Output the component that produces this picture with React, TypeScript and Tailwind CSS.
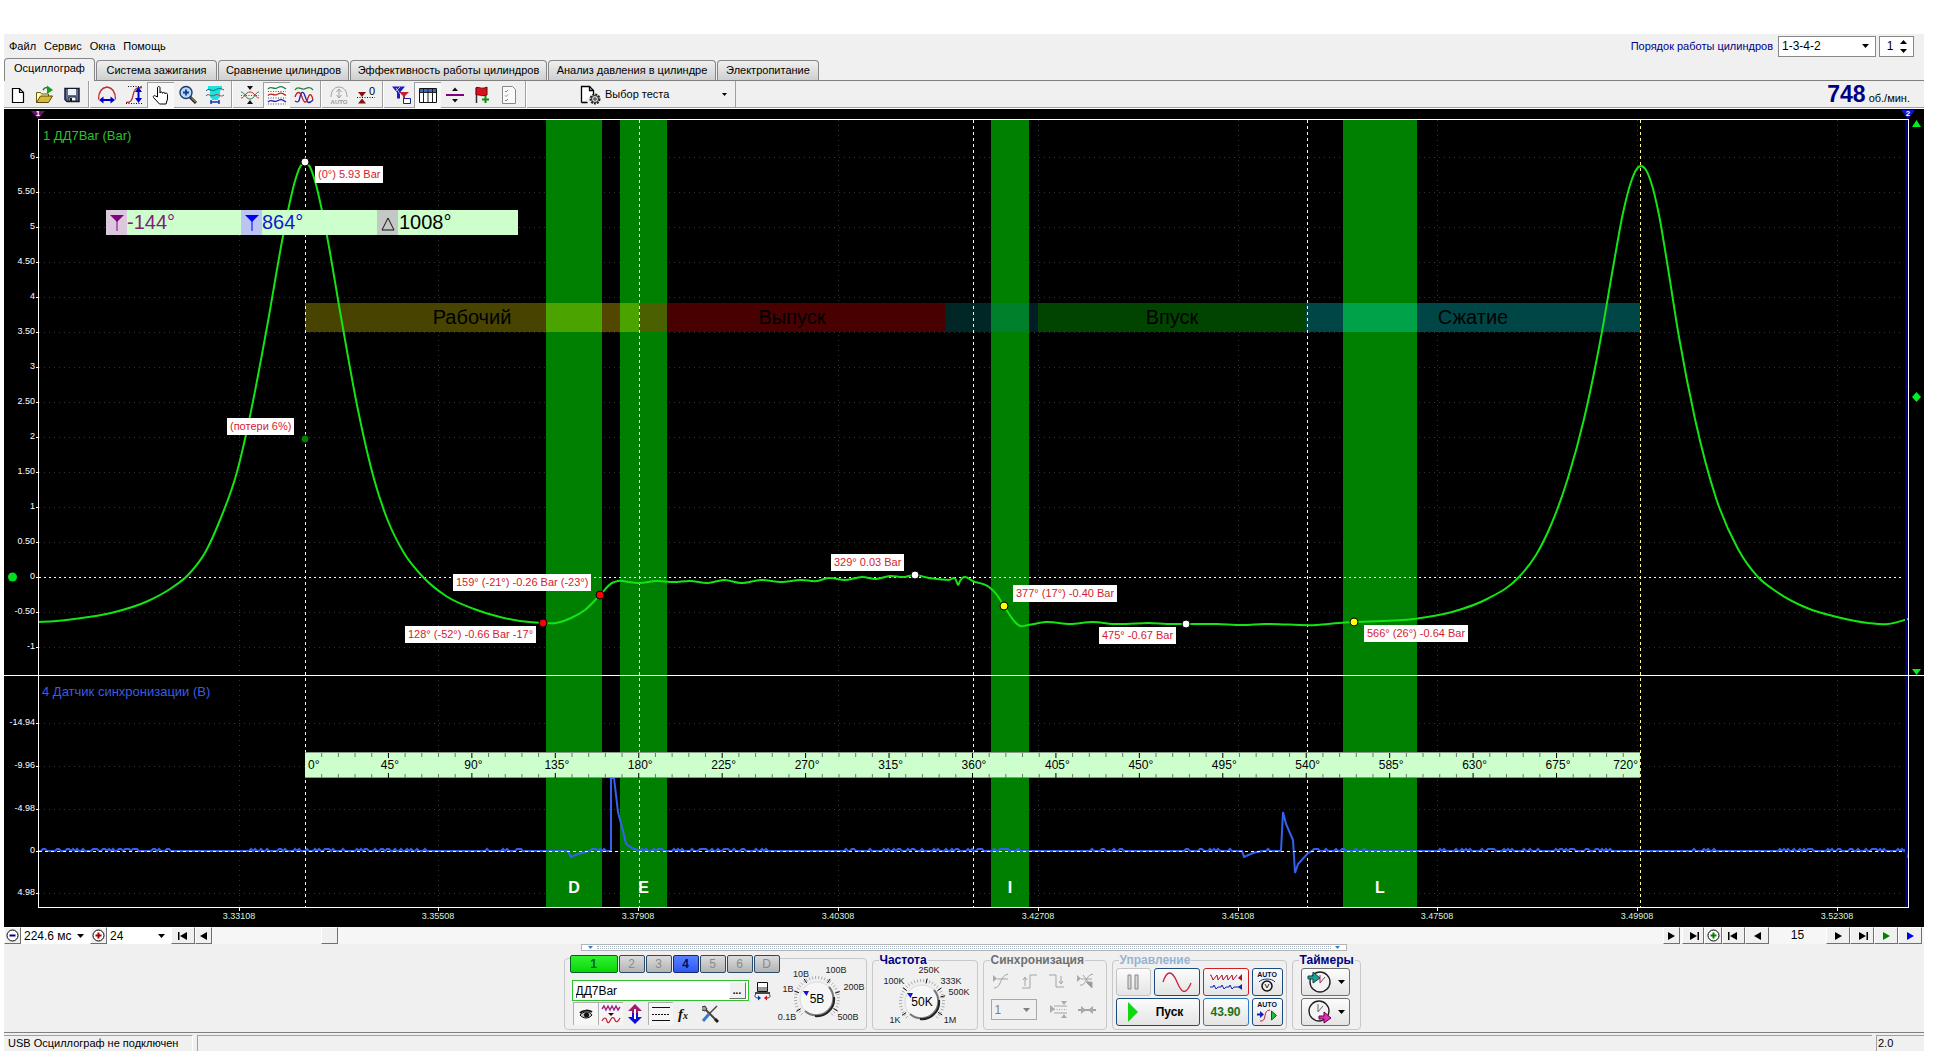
import type { ReactNode } from 'react';
import clsx from 'clsx';

// the scope canvas is drawn in one coordinate space, shared by the svg and the html labels
const VIEW = { x: 4, y: 109, w: 1920, h: 818 };

const at = (x: number, y: number) => ({
  left: `${((x - VIEW.x) / VIEW.w) * 100}%`,
  top: `${((y - VIEW.y) / VIEW.h) * 100}%`,
});

const barY = (v: number) => 577 - 70 * v;
const degX = (d: number) => 305 + d * 1.8547;

const menu = ['Файл', 'Сервис', 'Окна', 'Помощь'];

const tabs = [
  { label: 'Осциллограф', width: 'w-[91px]' },
  { label: 'Система зажигания', width: 'w-[121px]' },
  { label: 'Сравнение цилиндров', width: 'w-[131px]' },
  { label: 'Эффективность работы цилиндров', width: 'w-[197px]' },
  { label: 'Анализ давления в цилиндре', width: 'w-[168px]' },
  { label: 'Электропитание', width: 'w-[102px]' },
];

const barTicks = [6, 5.5, 5, 4.5, 4, 3.5, 3, 2.5, 2, 1.5, 1, 0.5, 0, -0.5, -1];
const voltTicks = [
  { label: '-14.94', y: 723 },
  { label: '-9.96', y: 766 },
  { label: '-4.98', y: 809 },
  { label: '0', y: 851 },
  { label: '4.98', y: 893 },
];
const timeTicks = ['3.33108', '3.35508', '3.37908', '3.40308', '3.42708', '3.45108', '3.47508', '3.49908', '3.52308'].map(
  (label, i) => ({ label, x: Math.round(238.5 + i * 199.8) }),
);

const bands = [
  { letter: 'D', x1: 546, x2: 602 },
  { letter: 'E', x1: 620, x2: 667 },
  { letter: 'I', x1: 991, x2: 1029 },
  { letter: 'L', x1: 1343, x2: 1417 },
];

const phases = [
  { x1: 305, x2: 546, fill: '#484400' },
  { x1: 546, x2: 602, fill: '#4ba300' },
  { x1: 602, x2: 620, fill: '#524600' },
  { x1: 620, x2: 639, fill: '#4ba300' },
  { x1: 639, x2: 667, fill: '#4b6000' },
  { x1: 667, x2: 945, fill: '#480000' },
  { x1: 945, x2: 991, fill: '#002626' },
  { x1: 991, x2: 1029, fill: '#00802a' },
  { x1: 1029, x2: 1038, fill: '#001c26' },
  { x1: 1038, x2: 1306, fill: '#004400' },
  { x1: 1306, x2: 1343, fill: '#004646' },
  { x1: 1343, x2: 1417, fill: '#00a249' },
  { x1: 1417, x2: 1640, fill: '#004646' },
];

const phaseNames = [
  { label: 'Рабочий', x: 472 },
  { label: 'Выпуск', x: 792 },
  { label: 'Впуск', x: 1172 },
  { label: 'Сжатие', x: 1473 },
];

const callouts = [
  { text: '(0°) 5.93 Bar', x: 315, y: 166 },
  { text: '(потери 6%)', x: 227, y: 418 },
  { text: '159° (-21°) -0.26 Bar (-23°)', x: 453, y: 574 },
  { text: '128° (-52°) -0.66 Bar -17°', x: 405, y: 626 },
  { text: '329° 0.03 Bar', x: 831, y: 554 },
  { text: '377° (17°) -0.40 Bar', x: 1013, y: 585 },
  { text: '475° -0.67 Bar', x: 1099, y: 627 },
  { text: '566° (26°) -0.64 Bar', x: 1364, y: 625 },
];

const dots = [
  { x: 305, y: 162, fill: '#ffffff' },
  { x: 305, y: 439, fill: '#008000' },
  { x: 543, y: 623, fill: '#ff0000' },
  { x: 600, y: 595, fill: '#ff0000' },
  { x: 915, y: 575, fill: '#ffffff' },
  { x: 1004, y: 606, fill: '#ffff00' },
  { x: 1186, y: 624, fill: '#ffffff' },
  { x: 1354, y: 622, fill: '#ffff00' },
];

const pressure: [number, number][] = [
  [39, 622], [56, 621], [74, 619], [111, 613], [148, 601], [170, 589], [188, 575], [206, 551], [220, 520], [237, 472],
  [250, 416], [267, 327], [283, 236], [289, 206], [295, 181], [300, 167], [305, 163], [310, 167], [315, 181],
  [321, 206], [327, 236], [341, 317], [358, 410], [374, 479], [388, 521], [404, 553], [423, 577], [446, 596],
  [474, 609], [500, 617], [520, 621], [543, 623], [556, 623], [571, 618], [585, 610], [600, 595], [612, 583],
  [618, 581], [629, 582], [639, 583], [656, 581], [674, 582], [690, 581], [708, 583], [724, 580], [741, 583],
  [761, 580], [781, 582], [801, 580], [817, 581], [828, 578], [846, 580], [862, 577], [876, 579], [890, 576],
  [904, 577], [915, 575], [929, 578], [949, 580], [956, 580], [958, 585], [960, 581], [975, 582], [989, 587],
  [997, 595], [1004, 606], [1015, 622], [1020, 626], [1028, 625], [1046, 622], [1070, 624], [1093, 622], [1113, 624],
  [1126, 624], [1149, 623], [1167, 624], [1186, 624], [1217, 624], [1242, 625], [1264, 624], [1317, 625], [1339, 623],
  [1354, 622], [1414, 619], [1452, 612], [1487, 599], [1519, 577], [1536, 555], [1551, 525], [1568, 478], [1584, 419],
  [1601, 337], [1614, 262], [1623, 213], [1631, 182], [1636, 170], [1641, 166], [1646, 170], [1651, 182],
  [1659, 215], [1667, 262], [1679, 337], [1695, 419], [1716, 498], [1738, 549], [1758, 577], [1777, 592],
  [1807, 608], [1837, 617], [1868, 623], [1888, 624], [1908, 619],
];

// cubic through the samples, with each slope weighted by the spacing of its neighbours
function smooth(p: [number, number][]) {
  const seg = (i: number) => (p[i + 1][1] - p[i][1]) / (p[i + 1][0] - p[i][0]);
  const slope = (i: number) => {
    if (i === 0) return seg(0);
    if (i === p.length - 1) return seg(i - 1);
    const h0 = p[i][0] - p[i - 1][0];
    const h1 = p[i + 1][0] - p[i][0];
    return (seg(i - 1) * h1 + seg(i) * h0) / (h0 + h1);
  };
  let d = `M${p[0][0]} ${p[0][1]}`;
  for (let i = 0; i < p.length - 1; i++) {
    const [x0, y0] = p[i];
    const [x1, y1] = p[i + 1];
    const t = (x1 - x0) / 3;
    d += `C${(x0 + t).toFixed(1)} ${(y0 + t * slope(i)).toFixed(1)} ${(x1 - t).toFixed(1)} ${(y1 - t * slope(i + 1)).toFixed(1)} ${x1} ${y1}`;
  }
  return d;
}

function noise(from: number, to: number) {
  let d = '';
  for (let x = from; x <= to; x += 2) {
    const r = Math.abs(Math.sin(x * 12.9898) * 43758.5453) % 1;
    const busy = Math.sin(x / 47) + Math.sin(x / 19) > -0.4;
    d += `L${x} ${busy && r > 0.65 ? 849 : 851}`;
  }
  return d;
}

const syncPath =
  'M39 851' + noise(41, 561) + 'L568 851L571 857L578 854L586 852' + noise(588, 608) +
  'L611 851V778H614L618 812L624 835L626 844L632 848L640 851' + noise(642, 1240) +
  'L1242 851L1244 857L1253 853L1262 851' + noise(1264, 1280) +
  'L1281 851L1283 812L1286 824L1293 840L1295 873L1298 864L1308 853L1312 851' + noise(1314, 1906) + 'L1907 858';

function Pic({ children, w = 20, h = 20 }: { children: ReactNode; w?: number; h?: number }) {
  return (
    <svg width={w} height={h} viewBox={`0 0 ${w} ${h}`} fill="none" stroke="currentColor" className="shrink-0" aria-hidden="true">
      {children}
    </svg>
  );
}

const toolGroups: { name: string; on?: boolean; pic: ReactNode }[][] = [
  [
    { name: 'Новый', pic: <path d="M4.500 3.500h7l4 4v10h-11zM11.500 3.500v4h4" fill="#fff" stroke="#000" strokeWidth="1.200" /> },
    {
      name: 'Открыть',
      pic: (
        <>
          <path d="M1.500 17.500v-10h4l1 1.500h7v2" fill="#ffffc0" stroke="#6b5a10" />
          <path d="M1.500 17.500l4-6.500h12l-4 6.500z" fill="#d8b93c" stroke="#5a4a08" />
          <path d="M8 5c2-3 4-3 5-1" stroke="#1a7a1a" strokeWidth="1.500" />
          <path d="M12 0.500l6 4.500-6 4z" fill="#1a9a2a" stroke="none" />
        </>
      ),
    },
    {
      name: 'Сохранить',
      pic: (
        <>
          <path d="M3 3.500h14v13H5l-2-2z" fill="#5a6f9c" stroke="#1a1a2a" strokeWidth="1.500" />
          <path d="M6 4h8v6H6z" fill="#eef2f8" stroke="none" />
          <path d="M7 12h7v4H7z" fill="#fff" stroke="#222" />
          <path d="M8 13h2v3H8z" fill="#111" stroke="none" />
        </>
      ),
    },
  ],
  [
    {
      name: 'Амплитуда',
      pic: (
        <>
          <path d="M1.500 14.500C1.500 10 3 3 10 2c7 1 8.500 8 8.500 12.500" stroke="#c03030" strokeWidth="1.300" />
          <path d="M4 15h12" stroke="#0000d0" strokeWidth="2" />
          <path d="M6.500 11.500v7L2 15zM13.500 11.500v7L18 15z" fill="#0000d0" stroke="none" />
        </>
      ),
    },
    {
      name: 'Фронт',
      pic: (
        <>
          <path d="M2 17.500c5 0 6-2 7-7s2-8 9-8" stroke="#c03030" strokeWidth="1.300" />
          <path d="M4 1.500h14M2 18.500h16" stroke="#111" strokeDasharray="1 1.500" />
          <path d="M14.500 5v10" stroke="#0000d0" strokeWidth="2" />
          <path d="M11 7h7l-3.500-5zM11 13h7l-3.500 5z" fill="#0000d0" stroke="none" />
        </>
      ),
    },
    {
      name: 'Рука',
      on: true,
      pic: (
        <path
          d="M6.500 12V3c0-2 2.500-2 2.500 0v5c0-1.500 2.500-1.500 2.500.3 0-1.300 2.500-1.300 2.500.6 0-1.200 2.500-1.200 2.500.6V14l-1.500 5H8.500l-6-6.500c-1-1.500 1-2.500 2-1.500z"
          fill="#fff"
          stroke="#000"
        />
      ),
    },
    {
      name: 'Лупа',
      pic: (
        <>
          <path d="M12 12l6 6" stroke="#222" strokeWidth="3" />
          <path d="M13 12.500l5 5" stroke="#e0c060" />
          <circle cx="8" cy="7.500" r="6" fill="#b8d8f8" stroke="#223a66" strokeWidth="1.400" />
          <path d="M8 4.500v6M5 7.500h6" stroke="#1a3a90" strokeWidth="1.800" />
        </>
      ),
    },
    {
      name: 'Маркеры',
      pic: (
        <>
          <path d="M3 1h14v3l-2 2v6l-2 2v1H7v-1l-2-2V6L3 4z" fill="#20e0e0" stroke="none" />
          <path d="M1 6c3-4 5 1 9-1s5-2 9 0" stroke="#007070" />
          <path d="M1 11c3-4 4 2 9-1 4-2 5 3 9 0" stroke="#c03030" />
          <path d="M6 17h8M6 15v4M14 15v4" stroke="#1030b0" strokeWidth="1.500" />
        </>
      ),
    },
  ],
  [
    {
      name: 'Совместить',
      pic: (
        <>
          <path d="M1 7c4 0 4 7 9 7s5-7 9-7" stroke="#20803a" />
          <path d="M1 13c4 0 4-6 9-6s5 6 9 6" stroke="#c03030" />
          <path d="M1 10.500h18" stroke="#555" strokeDasharray="1 1.500" />
          <path d="M7 1h6l-3 4zM7 19h6l-3-4z" fill="#111" stroke="none" />
        </>
      ),
    },
    {
      name: 'Раздельно',
      on: true,
      pic: (
        <>
          <path d="M1 4c3-4 5 1 9-1s5-2 9 1" stroke="#208040" strokeWidth="1.300" />
          <path d="M1 10.500c3-4 5 1 9-1s5-2 9 1" stroke="#c02020" strokeWidth="1.300" />
          <path d="M1 17c3-4 5 1 9-1s5-2 9 1" stroke="#2020c0" strokeWidth="1.300" />
          <path d="M1 6.500h18M1 13h18M1 19h18" stroke="#555" strokeDasharray="1 1.500" />
        </>
      ),
    },
    {
      name: 'Наложить',
      pic: (
        <>
          <path d="M1 5c3-5 6 0 9-1s6-3 9 1" stroke="#208040" strokeWidth="1.300" />
          <path d="M1 16c3 2 4 1 5-4s3-7 5-1 3 9 8 4" stroke="#2020c0" strokeWidth="1.300" />
          <path d="M1 12c2-6 5-6 7 0s4 7 6 1 4-3 5 2" stroke="#c02020" strokeWidth="1.300" />
        </>
      ),
    },
  ],
  [
    {
      name: 'Авто',
      pic: (
        <>
          <path d="M2 12c0-6 3-10 8-10s8 4 8 10" stroke="#a0a0a0" />
          <path d="M10 4v9M7.500 7L10 4l2.500 3M7.500 10l2.500 3 2.500-3" stroke="#a0a0a0" />
          <text x="10" y="19" textAnchor="middle" fontSize="6" fontWeight="700" fill="#999" stroke="none">AUTO</text>
        </>
      ),
    },
    {
      name: 'Обнулить',
      pic: (
        <>
          <path d="M2 7h8l-4 5zM2 18.500h8l-4-5z" fill="#8b1010" stroke="none" />
          <path d="M1 12.500h18" stroke="#111" strokeDasharray="1 1.500" />
          <text x="16" y="10" textAnchor="middle" fontSize="11" fill="#000" stroke="none">0</text>
        </>
      ),
    },
  ],
  [
    {
      name: 'Фильтр',
      pic: (
        <>
          <path d="M1 1.500h13l-5 6v6H6v-6z" fill="#1c1cc0" stroke="none" />
          <path d="M5 3l5 7M9 2l-5 5" stroke="#fff" strokeWidth=".7" />
          <path d="M8 7h10l-4 4v5h-2v-5z" fill="#c81e3c" stroke="none" />
          <path d="M12.500 13.500h7v5h-7z" fill="#fff" stroke="#1c1c90" />
        </>
      ),
    },
    {
      name: 'Таблица',
      on: true,
      pic: (
        <>
          <path d="M1.500 3.500h17v14h-17z" fill="#fff" stroke="#111" />
          <path d="M2 4h16v3H2z" fill="#3a6ac0" stroke="none" />
          <path d="M2 7.500h16M5.500 4v13M10 4v13M14.500 4v13" stroke="#222" />
        </>
      ),
    },
    {
      name: 'Линия',
      pic: (
        <>
          <path d="M1 10h18" stroke="#800080" strokeWidth="2" />
          <path d="M7 6h6l-3-3.500zM7 14h6l-3 3.500z" fill="#111" stroke="none" />
        </>
      ),
    },
    {
      name: 'Метка',
      pic: (
        <>
          <path d="M4.500 2v16" stroke="#333" strokeWidth="1.500" />
          <path d="M4 3c3-2 5 2 11-1v8c-6 2-8-1-11 0z" fill="#d81020" stroke="#700" />
          <path d="M13.500 11v7M10 14.500h7" stroke="#109010" strokeWidth="2" />
        </>
      ),
    },
    {
      name: 'Список',
      pic: (
        <>
          <path d="M3.500 1.500h10l3 3v14h-13z" fill="#fafafa" stroke="#888" />
          <path d="M6 6l1 1 2-2M6 10.500l1 1 2-2M6 15l1 1 2-2" stroke="#888" />
        </>
      ),
    },
  ],
];

function Select({ label, value, className, arrow = 'right-1' }: { label: string; value: string; className: string; arrow?: string }) {
  return (
    <div className={clsx('relative flex items-center', className)}>
      <select aria-label={label} className="h-full w-full appearance-none bg-transparent px-[3px] outline-none">
        <option>{value}</option>
      </select>
      <svg width="7" height="4" viewBox="0 0 7 4" className={clsx('pointer-events-none absolute', arrow)} aria-hidden="true">
        <path d="M0 0h7L3.500 4z" fill="currentColor" />
      </svg>
    </div>
  );
}

function Header() {
  return (
    <header>
      <div className="flex h-6 items-center justify-between pr-[10px]">
        <nav className="flex gap-2 pt-px pl-[5px] text-[11px]">
          {menu.map((m) => (
            <button key={m} type="button">{m}</button>
          ))}
        </nav>
        <div className="flex h-[22px] items-center gap-[3px]">
          <label htmlFor="cylinder" className="pr-[2px] text-[11px] text-[#000080]">Порядок работы цилиндров</label>
          <Select label="Порядок работы цилиндров" value="1-3-4-2" className="h-[21px] w-[98px] border border-[#888] bg-white text-[12px]" arrow="right-[6px]" />
          <div className="flex h-[21px] w-[35px] items-center border border-[#888] bg-white">
            <input id="cylinder" defaultValue="1" className="w-5 bg-transparent text-center text-[12px] outline-none" />
            <svg width="7" height="13" viewBox="0 0 7 13" aria-hidden="true">
              <path d="M0 4h7L3.500 0zM0 9h7l-3.500 4z" fill="#000" />
            </svg>
          </div>
        </div>
      </div>

      <div role="tablist" className="flex h-[23px] items-end gap-px border-b border-[#808080] text-[11px]">
        {tabs.map((tab, i) => (
          <button
            key={tab.label}
            type="button"
            role="tab"
            aria-selected={i === 0}
            className={clsx(
              'rounded-t border border-b-0 border-[#868686] whitespace-nowrap',
              tab.width,
              i === 0 ? '-mb-px h-[23px] bg-[#f0f0f0] pb-[3px]' : 'h-5 bg-linear-to-b from-[#f0f0f0] to-[#cfcfcf]',
            )}
          >
            {tab.label}
          </button>
        ))}
      </div>

      <div className="flex h-7 items-center justify-between border-b border-white pr-[14px] shadow-[inset_0_-1px_0_#a0a0a0]">
        <div className="flex h-full items-center">
          {toolGroups.map((group, g) => (
            <div key={g} className="flex h-full items-center">
              {group.map((tool) => (
                <button
                  key={tool.name}
                  type="button"
                  title={tool.name}
                  className={clsx(
                    'flex h-[26px] w-[27px] items-center justify-center',
                    tool.on && 'border-t border-l border-[#a0a0a0] bg-[#f8f8f8]',
                  )}
                >
                  <Pic>{tool.pic}</Pic>
                </button>
              ))}
              <span className="mx-[3px] h-full w-[2px] border-l border-[#a0a0a0] bg-white" />
            </div>
          ))}
          <button type="button" className="flex h-full w-[206px] items-center border-r border-[#a0a0a0] pr-2 pl-[50px] text-[11px]">
            <Pic w={22}>
              <path d="M1.500 17.500v-16h8l4 4v4" fill="#fff" stroke="#000" strokeWidth="1.300" />
              <path d="M1.500 17.500h6M9.500 1.500v4h4" stroke="#000" strokeWidth="1.300" />
              <circle cx="15" cy="14" r="4.500" fill="#ddd" stroke="#222" strokeWidth="2" strokeDasharray="2 1" />
              <circle cx="15" cy="14" r="3.500" stroke="#333" />
              <circle cx="15" cy="14" r="1.200" stroke="#222" />
            </Pic>
            <span className="pl-[3px]">Выбор теста</span>
            <svg width="5" height="3" viewBox="0 0 5 3" className="ml-auto" aria-hidden="true">
              <path d="M0 0h5L2.500 3z" />
            </svg>
          </button>
        </div>
        <div className="flex items-baseline gap-[3px] text-[11px]">
          <strong className="text-[23px] leading-6 text-[#000080]">748</strong>
          <span>об./мин.</span>
        </div>
      </div>
    </header>
  );
}

function ScopeDrawing() {
  return (
    <svg viewBox={`${VIEW.x} ${VIEW.y} ${VIEW.w} ${VIEW.h}`} preserveAspectRatio="none" className="absolute inset-0 h-full w-full" fill="none" aria-hidden="true">
      <g stroke="#333" strokeDasharray="1 4" shapeRendering="crispEdges">
        {barTicks.filter((v) => v !== 0).map((v) => (
          <path key={v} d={`M39 ${barY(v) + 0.5}H1904`} />
        ))}
        {voltTicks.filter((t) => t.label !== '0').map((t) => (
          <path key={t.label} d={`M39 ${t.y + 0.5}H1904`} />
        ))}
        {timeTicks.map((t) => (
          <path key={t.label} d={`M${t.x + 0.5} 120V907`} />
        ))}
      </g>

      <g fill="#008000">
        {bands.map((b) => (
          <path key={b.letter} d={`M${b.x1} 120H${b.x2}V907H${b.x1}z`} />
        ))}
      </g>
      {phases.map((p) => (
        <path key={p.x1} d={`M${p.x1} 303H${p.x2}V332H${p.x1}z`} fill={p.fill} />
      ))}

      <g shapeRendering="crispEdges">
        <path d="M39 577.500H1904" stroke="#fff" strokeDasharray="2 3" />
        {[0, 180, 360, 540, 720].map((d) => (
          <path key={d} d={`M${Math.round(degX(d)) + 0.5} 120V907`} stroke="#ffff90" strokeDasharray="3 3" />
        ))}
      </g>

      <path d={smooth(pressure)} stroke="#14e414" strokeWidth="2" />
      <path d={syncPath} stroke="#3560f0" strokeWidth="2" />
      <path d="M39 851.500H1904" stroke="#fff" strokeDasharray="3 3" shapeRendering="crispEdges" />

      <g shapeRendering="crispEdges">
        <path d="M1905 120h2v788h-2z" fill="#00007a" />
        <path d="M38.500 119.500H1908.500V908M4 675.500H1924M38.500 119V907.500H1908" stroke="#fff" />
        {barTicks.map((v) => (
          <path key={v} d={`M36 ${barY(v) + 0.5}h3`} stroke="#fff" />
        ))}
        {voltTicks.map((t) => (
          <path key={t.label} d={`M36 ${t.y + 0.5}h3`} stroke="#fff" />
        ))}
        {timeTicks.map((t) => (
          <path key={t.label} d={`M${t.x + 0.5} 907v4`} stroke="#fff" />
        ))}
      </g>

      <path d="M31 111h14l-7 8z" fill="#6a1070" />
      <path d="M1901 110h14l-7 9z" fill="#1414c8" />
      <circle cx="12.500" cy="577" r="4.500" fill="#00e020" />
      <path d="M1912 127h9l-4.500-7zM1912 669h9l-4.500 6z" fill="#00f020" />
      <path d="M1916.500 392l4.500 5-4.500 5-4.500-5z" fill="#00f020" />
      {dots.map((d) => (
        <circle key={`${d.x}-${d.y}`} cx={d.x} cy={d.y} r="4" fill={d.fill} stroke="#000" />
      ))}
    </svg>
  );
}

function DegreeRuler() {
  const marks = Array.from({ length: 79 }, (_, i) => (i + 1) * 9);
  return (
    <div className="absolute h-[26px] w-[69.53%]" style={at(305, 752)}>
      <svg viewBox="0 0 720 26" preserveAspectRatio="none" className="h-full w-full" aria-hidden="true">
        <path d="M0 0h720v26H0z" fill="#ccffcc" />
        <path d="M0 .5h720M0 25.500h720" stroke="#8a9a8a" />
        {marks.map((m) => (
          <path
            key={m}
            d={m % 45 ? `M${m} 1v4M${m} 22v4` : `M${m} 1v5M${m} 21v5`}
            stroke={m % 45 ? '#6a7a6a' : '#000'}
            vectorEffect="non-scaling-stroke"
          />
        ))}
      </svg>
      <div className="absolute inset-0 text-[12px] leading-[26px] text-black">
        <span className="absolute left-[3px]">0°</span>
        {Array.from({ length: 15 }, (_, i) => (i + 1) * 45).map((d) => (
          <span key={d} className="absolute -translate-x-1/2 pl-[3px]" style={{ left: `${d / 7.2}%` }}>{d}°</span>
        ))}
        <span className="absolute right-[2px]">720°</span>
      </div>
    </div>
  );
}

function CursorBar() {
  return (
    <div className="absolute flex h-[25px] bg-[#ccffcc] text-[20px] leading-[25px]" style={at(106, 210)}>
      <div className="flex w-[135px]">
        <span className="flex w-[21px] items-center justify-center bg-[#dcc8dc]">
          <Pic w={16}><path d="M1 2h14L8 9z" fill="#800080" stroke="none" /><path d="M8 8v10" stroke="#800080" /></Pic>
        </span>
        <span className="text-[#80207a]">-144°</span>
      </div>
      <div className="flex w-[136px]">
        <span className="flex w-[21px] items-center justify-center bg-[#bcc4f4]">
          <Pic w={16}><path d="M1 2h14L8 9z" fill="#0000f0" stroke="none" /><path d="M8 8v10" stroke="#0000f0" /></Pic>
        </span>
        <span className="text-[#1418d0]">864°</span>
      </div>
      <div className="flex w-[141px]">
        <span className="flex w-[21px] items-center justify-center bg-[#c4c8c4]">
          <Pic w={16}><path d="M2 17h12L8 5z" stroke="#111" /></Pic>
        </span>
        <span className="pl-px text-black">1008°</span>
      </div>
    </div>
  );
}

function Scope() {
  return (
    <main className="relative min-h-[480px] flex-1 overflow-hidden bg-black text-white">
      <ScopeDrawing />
      <p className="absolute -translate-y-1/2 text-[13px] text-[#2cc02c]" style={at(43, 136)}>1 ДД7Bar (Bar)</p>
      <p className="absolute -translate-y-1/2 text-[13px] text-[#3c5ce0]" style={at(42, 692)}>4 Датчик синхронизации (В)</p>
      <span className="absolute -translate-x-1/2 -translate-y-1/2 text-[8px] font-bold" style={at(38, 114)}>1</span>
      <span className="absolute -translate-x-1/2 -translate-y-1/2 text-[8px] font-bold" style={at(1908, 114)}>2</span>

      {barTicks.map((v) => (
        <span key={v} className="absolute -translate-x-full -translate-y-1/2 text-[9px]" style={at(35, barY(v))}>
          {Number.isInteger(v) ? v : v.toFixed(2)}
        </span>
      ))}
      {voltTicks.map((t) => (
        <span key={t.label} className="absolute -translate-x-full -translate-y-1/2 text-[9px]" style={at(35, t.y)}>{t.label}</span>
      ))}
      {timeTicks.map((t) => (
        <span key={t.label} className="absolute -translate-x-1/2 -translate-y-1/2 text-[9px] text-[#d8f4d8]" style={at(t.x, 917)}>{t.label}</span>
      ))}
      {bands.map((b) => (
        <span key={b.letter} className="absolute -translate-x-1/2 -translate-y-1/2 text-[16px] font-bold" style={at((b.x1 + b.x2) / 2, 888)}>{b.letter}</span>
      ))}
      {phaseNames.map((p) => (
        <span key={p.label} className="absolute -translate-x-1/2 -translate-y-1/2 text-[20px] text-black" style={at(p.x, 317)}>{p.label}</span>
      ))}
      {callouts.map((c) => (
        <span key={c.text} className="absolute bg-white px-[3px] text-[11px] leading-[17px] whitespace-nowrap text-[#d41c30]" style={at(c.x, c.y)}>{c.text}</span>
      ))}
      <CursorBar />
      <DegreeRuler />
    </main>
  );
}

const raised = 'flex h-[17px] items-center justify-center border border-white border-r-[#707070] border-b-[#707070] bg-[#f0f0f0]';

function Glyph({ kind, color = '#000' }: { kind: 'prev' | 'first' | 'next' | 'last'; color?: string }) {
  const back = kind === 'prev' || kind === 'first';
  return (
    <svg width="11" height="8" viewBox="0 0 11 8" fill={color} aria-hidden="true">
      <path d={back ? 'M9 0v8L2 4z' : 'M2 0v8l7-4z'} />
      {kind === 'first' && <path d="M0 0h1.500v8H0z" />}
      {kind === 'last' && <path d="M9.500 0H11v8H9.500z" />}
    </svg>
  );
}

function ZoomGlyph({ plus, color }: { plus?: boolean; color: string }) {
  return (
    <svg width="13" height="13" viewBox="0 0 13 13" fill="none" aria-hidden="true">
      <circle cx="6.500" cy="6.500" r="5.500" fill="#fff" stroke="#000" />
      <path d={plus ? 'M3.500 6.500h6M6.500 3.500v6' : 'M3.500 6.500h6'} stroke={color} strokeWidth="2" />
    </svg>
  );
}

function Transport() {
  return (
    <div className="flex h-[17px] items-stretch bg-[#f6f6f6] pr-[2px] text-[12px]">
      <button type="button" title="Уменьшить" className={clsx(raised, 'w-[17px]')}><ZoomGlyph color="#000080" /></button>
      <Select label="Развертка" value="224.6 мс" className="w-[69px] bg-white" arrow="right-[6px]" />
      <button type="button" title="Увеличить" className={clsx(raised, 'w-[17px]')}><ZoomGlyph plus color="#a00000" /></button>
      <Select label="Кадр" value="24" className="w-[64px] bg-white" arrow="right-[6px]" />
      <button type="button" title="В начало" className={clsx(raised, 'w-6')}><Glyph kind="first" /></button>
      <button type="button" title="Назад" className={clsx(raised, 'w-[17px]')}><Glyph kind="prev" /></button>
      <div className="flex flex-1 pl-[5.7%]">
        <button type="button" title="Прокрутка" className={clsx(raised, 'w-[17px]')} />
      </div>
      <button type="button" title="Вперед" className={clsx(raised, 'mr-[2px] w-[17px]')}><Glyph kind="next" /></button>
      <button type="button" title="В конец" className={clsx(raised, 'w-[22px]')}><Glyph kind="last" /></button>
      <button type="button" title="Добавить" className={clsx(raised, 'w-[18px]')}><ZoomGlyph plus color="#008000" /></button>
      <button type="button" title="Первый кадр" className={clsx(raised, 'w-[23px]')}><Glyph kind="first" /></button>
      <button type="button" title="Предыдущий кадр" className={clsx(raised, 'w-6')}><Glyph kind="prev" /></button>
      <span className="w-[57px] text-center leading-[17px]">15</span>
      <button type="button" title="Следующий кадр" className={clsx(raised, 'w-6')}><Glyph kind="next" /></button>
      <button type="button" title="Последний кадр" className={clsx(raised, 'w-6')}><Glyph kind="last" /></button>
      <button type="button" title="Воспроизвести" className={clsx(raised, 'w-6')}><Glyph kind="next" color="#008000" /></button>
      <button type="button" title="Повтор" className={clsx(raised, 'w-6')}><Glyph kind="next" color="#0000f0" /></button>
    </div>
  );
}

function Dial({ w, cx, value, pointer, marks }: { w: number; cx: number; value: string; pointer: [number, number]; marks: [string, number, number][] }) {
  const ring = Array.from({ length: 34 }, (_, i) => ((i * 8.2 - 225) * Math.PI) / 180);
  const main = marks.map(([, x, y]) => Math.atan2(y - 39, x - cx));
  return (
    <svg width={w} height="66" viewBox={`0 0 ${w} 66`} fill="none" role="img" aria-label={value}>
      {ring.map((a) => (
        <path key={a} d={`M${cx + 20 * Math.cos(a)} ${39 + 20 * Math.sin(a)}L${cx + 23 * Math.cos(a)} ${39 + 23 * Math.sin(a)}`} stroke="#aaa" />
      ))}
      {main.map((a) => (
        <path key={a} d={`M${cx + 19 * Math.cos(a)} ${39 + 19 * Math.sin(a)}L${cx + 24 * Math.cos(a)} ${39 + 24 * Math.sin(a)}`} stroke="#111" />
      ))}
      <circle cx={cx} cy="39" r="17" fill="#f6f6f6" stroke="#d8d8d8" />
      <path d={`M${cx + 12} 27A17 17 0 0 1 ${cx - 12} 51`} stroke="#777" strokeWidth="2" />
      <path d={`M${cx + 17} 37A17 17 0 0 1 ${cx - 2} 56`} stroke="#222" strokeWidth="2" />
      <path d={`M${pointer[0] - 3} ${pointer[1] - 2}h6l-2.500 5z`} fill="#1414d0" />
      <text x={cx} y="43" textAnchor="middle" fontSize="12" fill="#000">{value}</text>
      {marks.map(([label, x, y]) => (
        <text key={label} x={x} y={y + 3} textAnchor="middle" fontSize="9" fill="#222">{label}</text>
      ))}
    </svg>
  );
}

const channels = [
  { name: '1', style: 'w-12 border-[#0a5a2a] bg-linear-to-b from-[#30f030] to-[#00d800] font-bold text-[#063]' },
  { name: '2', style: 'w-[26px] border-[#2a4a6a] bg-linear-to-b from-[#dcdcdc] to-[#b4b4b4] text-[#8a8a8a]' },
  { name: '3', style: 'w-[26px] border-[#2a4a6a] bg-linear-to-b from-[#dcdcdc] to-[#b4b4b4] text-[#8a8a8a]' },
  { name: '4', style: 'w-[26px] border-[#102a6a] bg-linear-to-b from-[#5a80ff] to-[#3058f0] font-bold text-[#001060]' },
  { name: '5', style: 'w-[26px] border-[#2a4a6a] bg-linear-to-b from-[#dcdcdc] to-[#b4b4b4] text-[#8a8a8a]' },
  { name: '6', style: 'w-[26px] border-[#2a4a6a] bg-linear-to-b from-[#dcdcdc] to-[#b4b4b4] text-[#8a8a8a]' },
  { name: 'D', style: 'w-[26px] border-[#2a4a6a] bg-linear-to-b from-[#dcdcdc] to-[#b4b4b4] text-[#8a8a8a]' },
];

const channelTools: { name: string; on?: boolean; pic: ReactNode }[] = [
  {
    name: 'Показать',
    on: true,
    pic: (
      <>
        <path d="M4 11c3-4 10-4 12 0-3 4-9 4-12 0z" fill="#bbb" stroke="#111" />
        <circle cx="10.500" cy="11" r="2.500" fill="#111" stroke="none" />
        <path d="M4 9c3-3 9-3 12-1" stroke="#111" strokeWidth="2" />
      </>
    ),
  },
  {
    name: 'Фильтр',
    on: true,
    pic: (
      <>
        <path d="M1 5l2-3 2 4 2-4 2 4 2-4 2 4 2-4 2 4 2-3" stroke="#a0208a" strokeWidth="1.400" />
        <path d="M7 9h6l-3 3z" fill="#111" stroke="none" />
        <path d="M1 17c2-4 4-4 5 0s3 0 4-2 3-2 4 1 3 2 5-2" stroke="#c02030" strokeWidth="1.200" />
      </>
    ),
  },
  {
    name: 'Инвертировать',
    pic: (
      <>
        <path d="M10 0l7 7h-4v4H7V7H3z" fill="#a01a70" stroke="none" />
        <path d="M10 20l7-7h-4V9H7v4H3z" fill="#1010d8" stroke="none" />
        <path d="M10 5v10" stroke="#fff" strokeWidth="2" />
      </>
    ),
  },
  { name: 'Линии', on: true, pic: <><path d="M1 3.500h18M1 16.500h18" stroke="#111" /><path d="M1 10.500h18" stroke="#111" strokeDasharray="2 1" /></> },
  {
    name: 'Функция',
    pic: (
      <text x="3" y="15" fontSize="15" fontStyle="italic" fontWeight="700" fontFamily="Liberation Serif, serif" fill="#111" stroke="none">
        f<tspan fontSize="10">x</tspan>
      </text>
    ),
  },
  {
    name: 'Настройка',
    pic: (
      <>
        <path d="M4 4l12 12" stroke="#444" strokeWidth="2" />
        <path d="M2 3l3-1 2 3-2 2-3-1" fill="#999" stroke="#333" />
        <path d="M17 2l-8 8" stroke="#444" strokeWidth="1.500" />
        <path d="M9 10l-6 7" stroke="#3a78c8" strokeWidth="3" />
        <path d="M15 15l3 3" stroke="#222" strokeWidth="3" />
      </>
    ),
  },
];

const syncIcons: ReactNode[] = [
  <><path d="M2 4v7l4-3.500z" fill="#aaa" stroke="none" /><path d="M3 17c8 0 5-12 14-14M6 8h11" /></>,
  <><path d="M3 17h8V4h7" /><path d="M6 15V7M4 9l2-3 2 3" /></>,
  <><path d="M2 4h7v12h8" /><path d="M14 5v8M12 10l2 3 2-3" /></>,
  <><path d="M2 4v7l4-3.500z" fill="#aaa" stroke="none" /><path d="M5 14c6 2 5-10 13-11M8 4l9 12M6 8h11" /><path d="M11 11h6v6z" fill="#999" /></>,
];

function Group({ title, color, className, children }: { title: string; color: string; className: string; children: ReactNode }) {
  return (
    <fieldset className={clsx('h-[78px] rounded-sm border border-[#c8c8c8]', className)}>
      <legend className={clsx('ml-[6px] px-px text-[12px] leading-4 font-bold', color)}>{title}</legend>
      {children}
    </fieldset>
  );
}

const key = 'flex h-7 items-center justify-center rounded-[3px] border bg-linear-to-b from-[#fcfcfc] to-[#e4e4e4]';

function ControlPanel() {
  return (
    <section className="flex h-[89px] flex-col border-b border-[#808080]">
      <div className="mx-auto flex h-[7px] w-[766px] items-center justify-between border border-[#b4b4b4] bg-white px-[6px]">
        <svg width="5" height="3" viewBox="0 0 5 3" aria-hidden="true"><path d="M0 0h5L2.500 3z" fill="#2a80d0" /></svg>
        <span className="mx-1 h-[3px] flex-1 border-y border-dotted border-[#a8b8c8]" />
        <svg width="5" height="3" viewBox="0 0 5 3" aria-hidden="true"><path d="M0 0h5L2.500 3z" fill="#2a80d0" /></svg>
      </div>

      <div className="flex items-start justify-center gap-[5px] pt-px pr-1">
        <section aria-label="Канал" className="mt-[6px] flex h-[72px] w-[303px] rounded-sm border border-[#c8c8c8]">
          <div className="-mt-1 flex w-[216px] flex-col pl-[5px]">
            <div className="flex gap-px bg-[#f0f0f0] text-[12px]">
              {channels.map((c) => (
                <button key={c.name} type="button" className={clsx('h-[18px] shrink-0 rounded-xs border leading-4', c.style)}>{c.name}</button>
              ))}
            </div>
            <div className="mt-[7px] ml-[2px] flex items-center gap-1">
              <div className="flex h-[21px] w-[177px] border border-[#30c030] bg-white p-px pr-[2px]">
                <input aria-label="Датчик" defaultValue="ДД7Bar" className="min-w-0 flex-1 bg-transparent px-[2px] text-[12px] outline-none" />
                <button type="button" title="Выбрать датчик" className="w-[17px] border border-white border-r-[#707070] border-b-[#707070] bg-[#f0f0f0] text-[10px] leading-[10px] font-bold">...</button>
              </div>
              <button type="button" title="Подключение">
                <Pic>
                  <path d="M4.500 1.500h10v9h-10z" fill="#fff" stroke="#111" />
                  <path d="M5 6h9v4H5z" fill="#999" stroke="none" />
                  <path d="M2 12h15" stroke="#111" strokeWidth="1.500" />
                  <path d="M3 13c-2 2-1 4 2 4M16 13c2 2 1 4-2 4" stroke="#333" />
                  <path d="M5 14.500v5l3-2.500z" fill="#1030c0" stroke="none" />
                  <path d="M14 14.500v5l-3-2.500z" fill="#d01020" stroke="none" />
                </Pic>
              </button>
            </div>
            <div className="ml-[3px] flex pt-px">
              {channelTools.map((t) => (
                <button
                  key={t.name}
                  type="button"
                  title={t.name}
                  className={clsx('flex h-[23px] w-[25px] items-center justify-center', t.on && 'border-t border-l border-[#b0b0b0] bg-[#f6f6f6]')}
                >
                  <Pic>{t.pic}</Pic>
                </button>
              ))}
            </div>
          </div>
          <div className="-ml-1 pt-px">
            <Dial
              w={90}
              cx={41}
              value="5В"
              pointer={[30, 33]}
              marks={[['10В', 25, 14], ['100В', 60, 10], ['1В', 12, 29], ['200В', 78, 27], ['0.1В', 11, 57], ['500В', 72, 57]]}
            />
          </div>
        </section>

        <Group title="Частота" color="text-[#000080]" className="w-[106px]">
          <div className="-mt-[5px]">
            <Dial
              w={104}
              cx={49}
              value="50K"
              pointer={[37, 32]}
              marks={[['250K', 56, 7], ['100K', 21, 18], ['333K', 78, 18], ['500K', 86, 29], ['1K', 22, 57], ['1M', 77, 57]]}
            />
          </div>
        </Group>

        <Group title="Синхронизация" color="text-[#707070]" className="w-[124px]">
          <div className="flex flex-col gap-[8px] pt-[3px] pl-[7px] text-[#a4a4a4]">
            <div className="flex gap-2">
              {syncIcons.map((pic, i) => (
                <button key={i} type="button" disabled title="Фронт синхронизации"><Pic>{pic}</Pic></button>
              ))}
            </div>
            <div className="flex items-center gap-2">
              <Select label="Канал синхронизации" value="1" className="mr-1 h-[21px] w-[46px] border border-[#a8a8a8] text-[12px] text-[#808080]" arrow="right-[6px]" />
              <button type="button" disabled title="Уровень">
                <Pic><path d="M1 5v8l5-4z" fill="#aaa" stroke="none" /><path d="M5 6h13M5 13h13" /><path d="M5 9.500h13" strokeDasharray="1 1.500" /><path d="M12 1h6l-3 4zM12 18h6l-3-4z" fill="#aaa" stroke="none" /></Pic>
              </button>
              <button type="button" disabled title="Центр">
                <Pic><path d="M1 10h18" strokeWidth="2" /><path d="M4 6v8l5-4zM16 6v8l-5-4z" fill="#aaa" stroke="none" /></Pic>
              </button>
            </div>
          </div>
        </Group>

        <Group title="Управление" color="text-[#96b4d2]" className="w-[175px]">
          <div className="grid grid-cols-[35px_46px_46px_31px] gap-x-[3px] gap-y-[2px] pl-[3px]">
            <button type="button" title="Пауза" className={clsx(key, 'border-[#c4c4c4]')}>
              <Pic><path d="M5 3h3v14H5zM12 3h3v14h-3z" fill="#d8d8d8" stroke="#888" /></Pic>
            </button>
            <button type="button" title="Синус" className={clsx(key, 'border-[#1c4a7c]')}>
              <Pic w={32}><path d="M2 10C6-2 11-2 16 10s9 13 14 1" stroke="#c82040" strokeWidth="1.300" /></Pic>
            </button>
            <button type="button" title="Запись" className={clsx(key, 'border-[#d02020]')}>
              <Pic w={34}>
                <path d="M1 3h1l2 5 4-5 1 5 4-5 1 5 4-5 1 5 4-5 1 5 4-5" stroke="#b01030" />
                <path d="M33 2v7l-4-3z" fill="#b01030" stroke="none" />
                <path d="M1 15h3l1-2 2 4 2-2h3l1-2 2 4 2-2h3l1-2 2 4 2-2h5" stroke="#1020b0" />
                <path d="M33 12v6l-4-3z" fill="#1020b0" stroke="none" />
              </Pic>
            </button>
            <button type="button" title="Автоматический масштаб" className={clsx(key, 'border-[#1c4a7c]')}>
              <Pic h={22}>
                <text x="10" y="6" textAnchor="middle" fontSize="7" fontWeight="700" fill="#001040" stroke="none">AUTO</text>
                <circle cx="10" cy="15" r="5" fill="#eee" stroke="#111" strokeWidth="1.500" />
                <path d="M2 11c3-4 13-4 16 0" stroke="#1030a0" />
                <path d="M8 13l2 4 2-4" stroke="#333" />
              </Pic>
            </button>
            <button type="button" className={clsx(key, 'col-span-2 gap-[18px] border-[#1c4a7c] pr-1 text-[12px] font-bold')}>
              <svg width="10" height="20" viewBox="0 0 10 20" aria-hidden="true"><path d="M0 0v20l10-10z" fill="#10d810" /></svg>
              Пуск
            </button>
            <button type="button" className={clsx(key, 'border-[#2c7cc4] text-[12px] font-bold text-[#1c701c]')}>43.90</button>
            <button type="button" title="Автоматический пуск" className={clsx(key, 'border-[#1c4a7c]')}>
              <Pic h={22}>
                <text x="10" y="6" textAnchor="middle" fontSize="7" fontWeight="700" fill="#001040" stroke="none">AUTO</text>
                <path d="M0 13.500h4" stroke="#1020c0" strokeWidth="2" />
                <path d="M3 10v7l4-3.500z" fill="#1020c0" stroke="none" />
                <path d="M3 20c8 1 2-11 10-11" stroke="#c02040" />
                <path d="M14.500 10v9l5-4.500z" fill="#20c030" stroke="#0a5a1a" />
              </Pic>
            </button>
          </div>
        </Group>

        <Group title="Таймеры" color="text-[#000080]" className="w-[69px]">
          <div className="flex flex-col gap-[2px] pl-2">
            <button type="button" title="Таймер пуска" className={clsx(key, 'w-[49px] gap-[6px] border-[#707070]')}>
              <Pic w={26} h={24}>
                <circle cx="14" cy="12" r="10" fill="#f4f4f4" stroke="#222" strokeWidth="1.400" />
                <path d="M14 13V5M14 13l5-6" stroke="#a03050" />
                <path d="M2 6h5V2l7 6-7 5v-4H2z" fill="#20a090" stroke="#0a4a44" />
              </Pic>
              <svg width="7" height="4" viewBox="0 0 7 4" aria-hidden="true"><path d="M0 0h7L3.500 4z" /></svg>
            </button>
            <button type="button" title="Таймер остановки" className={clsx(key, 'w-[49px] gap-[6px] border-[#707070]')}>
              <Pic w={26} h={24}>
                <circle cx="13" cy="11" r="10" fill="#f4f4f4" stroke="#222" strokeWidth="1.400" />
                <path d="M12 12V4M12 12l5-6" stroke="#666" />
                <path d="M13 16h5v-4l7 6-7 5v-4h-5z" fill="#e030b0" stroke="#600050" />
              </Pic>
              <svg width="7" height="4" viewBox="0 0 7 4" aria-hidden="true"><path d="M0 0h7L3.500 4z" /></svg>
            </button>
          </div>
        </Group>
      </div>
    </section>
  );
}

export default function App() {
  return (
    <div className="flex min-h-screen flex-col bg-white pt-[34px] pr-3 pb-[5px] pl-1 font-['Liberation_Sans',Arial,sans-serif] text-black">
      <div className="flex flex-1 flex-col bg-[#f0f0f0]">
        <Header />
        <Scope />
        <Transport />
        <ControlPanel />
        <footer className="flex h-[18px] gap-1 pt-[2px] text-[11px] leading-[15px]">
          <span className="w-[189px] border-t border-r border-t-[#a0a0a0] border-r-white pl-1">USB Осциллограф не подключен</span>
          <span className="flex-1 border-t border-l border-[#a0a0a0]" />
          <span className="w-12 border-t border-l border-[#a0a0a0] pl-px">2.0</span>
        </footer>
      </div>
    </div>
  );
}
